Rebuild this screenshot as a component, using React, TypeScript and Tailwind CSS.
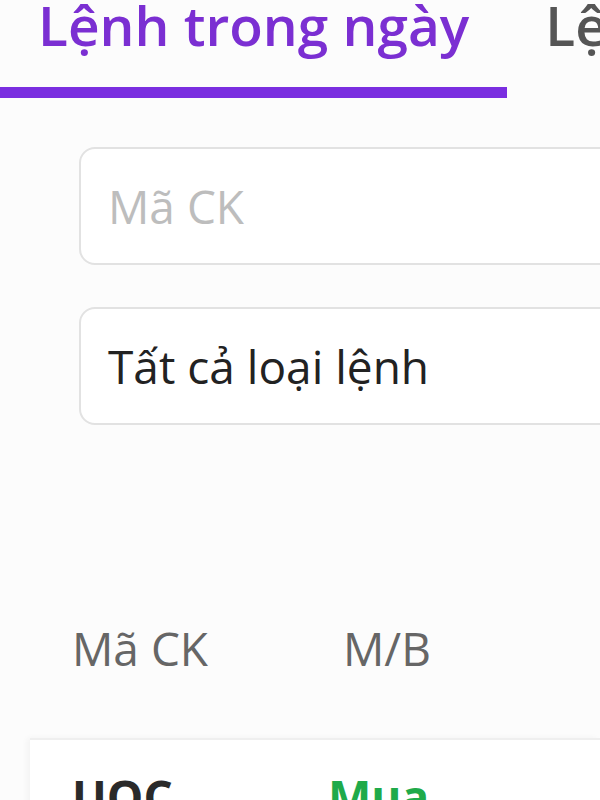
import React from 'react'

const font = { fontFamily: '"Open Sans", "Noto Sans", sans-serif' }

const App = () => {
  return (
    <div className="h-[800px] w-[600px] overflow-hidden bg-[#fcfcfc]" style={font}>
      {/* Tabs */}
      <div className="flex">
        <div className="flex shrink-0 flex-col">
          <span className="px-[38px] text-[55px] font-semibold leading-[50px] whitespace-nowrap text-[#7b2fd2]">
            Lệnh trong ngày
          </span>
          <div className="mt-[37px] h-[11px] w-full bg-[#7a2ee0]" />
        </div>
        <span className="ml-[38px] shrink-0 text-[55px] font-semibold leading-[50px] whitespace-nowrap text-[#555]">
          Lệnh điều kiện
        </span>
      </div>

      {/* Filters */}
      <div className="mt-[49px] flex flex-col gap-[42px] pl-[79px]">
        <div className="flex h-[118px] w-[600px] shrink-0 items-center rounded-[16px] border-2 border-[#e2e2e2] bg-white pl-[27px]">
          <span className="text-[46px] leading-[46px] text-[#bdbdbd]">Mã CK</span>
        </div>
        <div className="flex h-[118px] w-[600px] shrink-0 items-center rounded-[16px] border-2 border-[#e2e2e2] bg-white pl-[27px]">
          <span className="text-[46px] leading-[46px] text-[#222]">Tất cả loại lệnh</span>
        </div>
      </div>

      {/* Table header */}
      <div className="mt-[200px] flex pl-[72px] text-[46px] leading-[46px] text-[#666]">
        <span className="w-[271px] shrink-0">Mã CK</span>
        <span className="shrink-0">M/B</span>
      </div>

      {/* Table row */}
      <div className="mt-[67px] ml-[30px] border-t-2 border-[#efefef] bg-white pt-[33px] pl-[42px] shadow-[-3px_0_6px_rgba(0,0,0,0.04)]">
        <div className="flex text-[46px] font-bold leading-[46px]">
          <span className="w-[256px] shrink-0 text-[#2a2a2a]">UOC</span>
          <span className="shrink-0 text-[#1faa4a]">Mua</span>
        </div>
      </div>
    </div>
  )
}

export default App
